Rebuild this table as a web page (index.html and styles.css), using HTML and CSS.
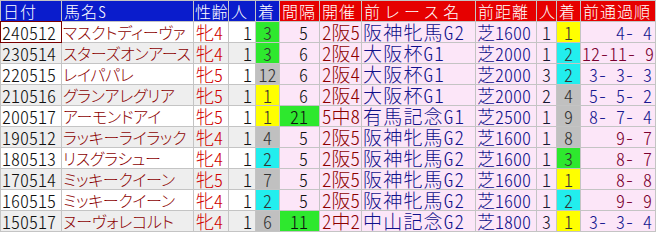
FILE: index.html
```html
<!DOCTYPE html>
<html lang="ja">
<head>
<meta charset="utf-8">
<title>前走成績</title>
<link rel="stylesheet" href="styles.css">
</head>
<body>
<div class="grid">
  <div class="h hb">日付</div>
  <div class="h hb">馬名S</div>
  <div class="h hb narrow">性齢</div>
  <div class="h hb">人</div>
  <div class="h hb">着</div>
  <div class="h hr">間隔</div>
  <div class="h hr">開催</div>
  <div class="h hr wide">前レース名</div>
  <div class="h hr">前距離</div>
  <div class="h hr">人</div>
  <div class="h hr">着</div>
  <div class="h hr">前通過順</div>

  <div class="c date sel">240512</div><div class="c name">マスクトディーヴァ</div><div class="c sex">牝4</div><div class="c pop">1</div><div class="c rank g">3</div>
  <div class="c int">5</div><div class="c kai">2阪5</div><div class="c race">阪神牝馬G2</div><div class="c dist">芝1600</div><div class="c ppop">1</div><div class="c rank y">1</div><div class="c pass nv">4-&ensp;4</div>

  <div class="c date alt">230514</div><div class="c name alt">スターズオンアース</div><div class="c sex alt">牝4</div><div class="c pop alt">1</div><div class="c rank g">3</div>
  <div class="c int">6</div><div class="c kai">2阪4</div><div class="c race">大阪杯G1</div><div class="c dist">芝2000</div><div class="c ppop">1</div><div class="c rank cy">2</div><div class="c pass mr">12-11-&ensp;9</div>

  <div class="c date">220515</div><div class="c name">レイパパレ</div><div class="c sex">牝5</div><div class="c pop">1</div><div class="c rank gr">12</div>
  <div class="c int">6</div><div class="c kai">2阪4</div><div class="c race">大阪杯G1</div><div class="c dist">芝2000</div><div class="c ppop">3</div><div class="c rank cy">2</div><div class="c pass nv">3-&ensp;3-&ensp;3</div>

  <div class="c date alt">210516</div><div class="c name alt">グランアレグリア</div><div class="c sex alt">牝5</div><div class="c pop alt">1</div><div class="c rank y">1</div>
  <div class="c int">6</div><div class="c kai">2阪4</div><div class="c race">大阪杯G1</div><div class="c dist">芝2000</div><div class="c ppop">2</div><div class="c rank gr">4</div><div class="c pass nv">5-&ensp;5-&ensp;2</div>

  <div class="c date">200517</div><div class="c name">アーモンドアイ</div><div class="c sex">牝5</div><div class="c pop">1</div><div class="c rank y">1</div>
  <div class="c int gi">21</div><div class="c kai">5中8</div><div class="c race">有馬記念G1</div><div class="c dist">芝2500</div><div class="c ppop">1</div><div class="c rank gr">9</div><div class="c pass nv">8-&ensp;7-&ensp;4</div>

  <div class="c date alt">190512</div><div class="c name alt">ラッキーライラック</div><div class="c sex alt">牝4</div><div class="c pop alt">1</div><div class="c rank gr">4</div>
  <div class="c int">5</div><div class="c kai">2阪5</div><div class="c race">阪神牝馬G2</div><div class="c dist">芝1600</div><div class="c ppop">1</div><div class="c rank gr">8</div><div class="c pass mr">9-&ensp;7</div>

  <div class="c date">180513</div><div class="c name">リスグラシュー</div><div class="c sex">牝4</div><div class="c pop">1</div><div class="c rank cy">2</div>
  <div class="c int">5</div><div class="c kai">2阪5</div><div class="c race">阪神牝馬G2</div><div class="c dist">芝1600</div><div class="c ppop">1</div><div class="c rank g">3</div><div class="c pass mr">8-&ensp;7</div>

  <div class="c date alt">170514</div><div class="c name alt">ミッキークイーン</div><div class="c sex alt">牝5</div><div class="c pop alt">1</div><div class="c rank gr">7</div>
  <div class="c int">5</div><div class="c kai">2阪5</div><div class="c race">阪神牝馬G2</div><div class="c dist">芝1600</div><div class="c ppop">1</div><div class="c rank y">1</div><div class="c pass mr">8-&ensp;8</div>

  <div class="c date">160515</div><div class="c name">ミッキークイーン</div><div class="c sex">牝4</div><div class="c pop">1</div><div class="c rank cy">2</div>
  <div class="c int">5</div><div class="c kai">2阪5</div><div class="c race">阪神牝馬G2</div><div class="c dist">芝1600</div><div class="c ppop">1</div><div class="c rank cy">2</div><div class="c pass mr">9-&ensp;9</div>

  <div class="c date alt">150517</div><div class="c name alt">ヌーヴォレコルト</div><div class="c sex alt">牝4</div><div class="c pop alt">1</div><div class="c rank gr">6</div>
  <div class="c int gi">11</div><div class="c kai">2中2</div><div class="c race">中山記念G2</div><div class="c dist">芝1800</div><div class="c ppop">3</div><div class="c rank y">1</div><div class="c pass nv">3-&ensp;3-&ensp;4</div>
</div>
</body>
</html>
```
FILE: styles.css
```css
html, body {
  margin: 0;
  padding: 0;
  background: #ffffff;
}

.grid {
  display: grid;
  grid-template-columns: 60px 131px 34px 26px 23px 39px 41px 113px 60px 19px 23px 74px;
  grid-auto-rows: 20px;
  gap: 1px;
  padding: 1px;
  width: max-content;
  background: #c4c4c4;
  font-family: "Noto Sans CJK JP", "Noto Sans", sans-serif;
  font-weight: 300;
  font-size: 18px;
  line-height: 20px;
  font-feature-settings: "hwid" 1;
}

.h, .c {
  white-space: pre;
  padding: 0 1px;
}

.h {
  color: #ffffff;
  font-size: 16px;
  letter-spacing: 1px;
  padding-left: 2px;
  padding-right: 0;
}
.h.narrow { letter-spacing: 0.5px; padding-left: 1px; }
.hb { background: #0a1ccc; }
.hr { background: #e60000; }
.wide { letter-spacing: 4px; }

.c { background: #ffffff; }
.c.alt { background: #eeeeee; }

.date { color: #111111; }
.sel { outline: 1px solid #7a0000; }
.name {
  color: #8c0000;
  font-size: 16px;
  letter-spacing: -0.3px;
  font-feature-settings: "palt" 1;
}
.sex { color: #d00000; padding-left: 2px; }
.pop { color: #111111; text-align: right; padding-right: 3px; }
.rank { text-align: center; color: #333333; padding: 0; }
.g { background: #2ee82e; }
.y { background: #ffff00; }
.cy { background: #22eeee; }
.gr { background: #c0c0c0; }

.int, .kai, .race, .dist, .ppop, .pass { background: #fce6f8; }
.int { color: #111111; text-align: right; padding-right: 11px; }
.int.gi { background: #2ee82e; }
.kai { color: #8c0000; font-size: 19px; padding-left: 2px; }
.race { color: #10108a; font-size: 19px; letter-spacing: 1.2px; }
.dist { color: #10108a; }
.ppop { color: #181830; text-align: center; padding: 0; }
.pass { text-align: right; padding-right: 3px; }
.nv { color: #181890; }
.mr { color: #7a0030; }
```
